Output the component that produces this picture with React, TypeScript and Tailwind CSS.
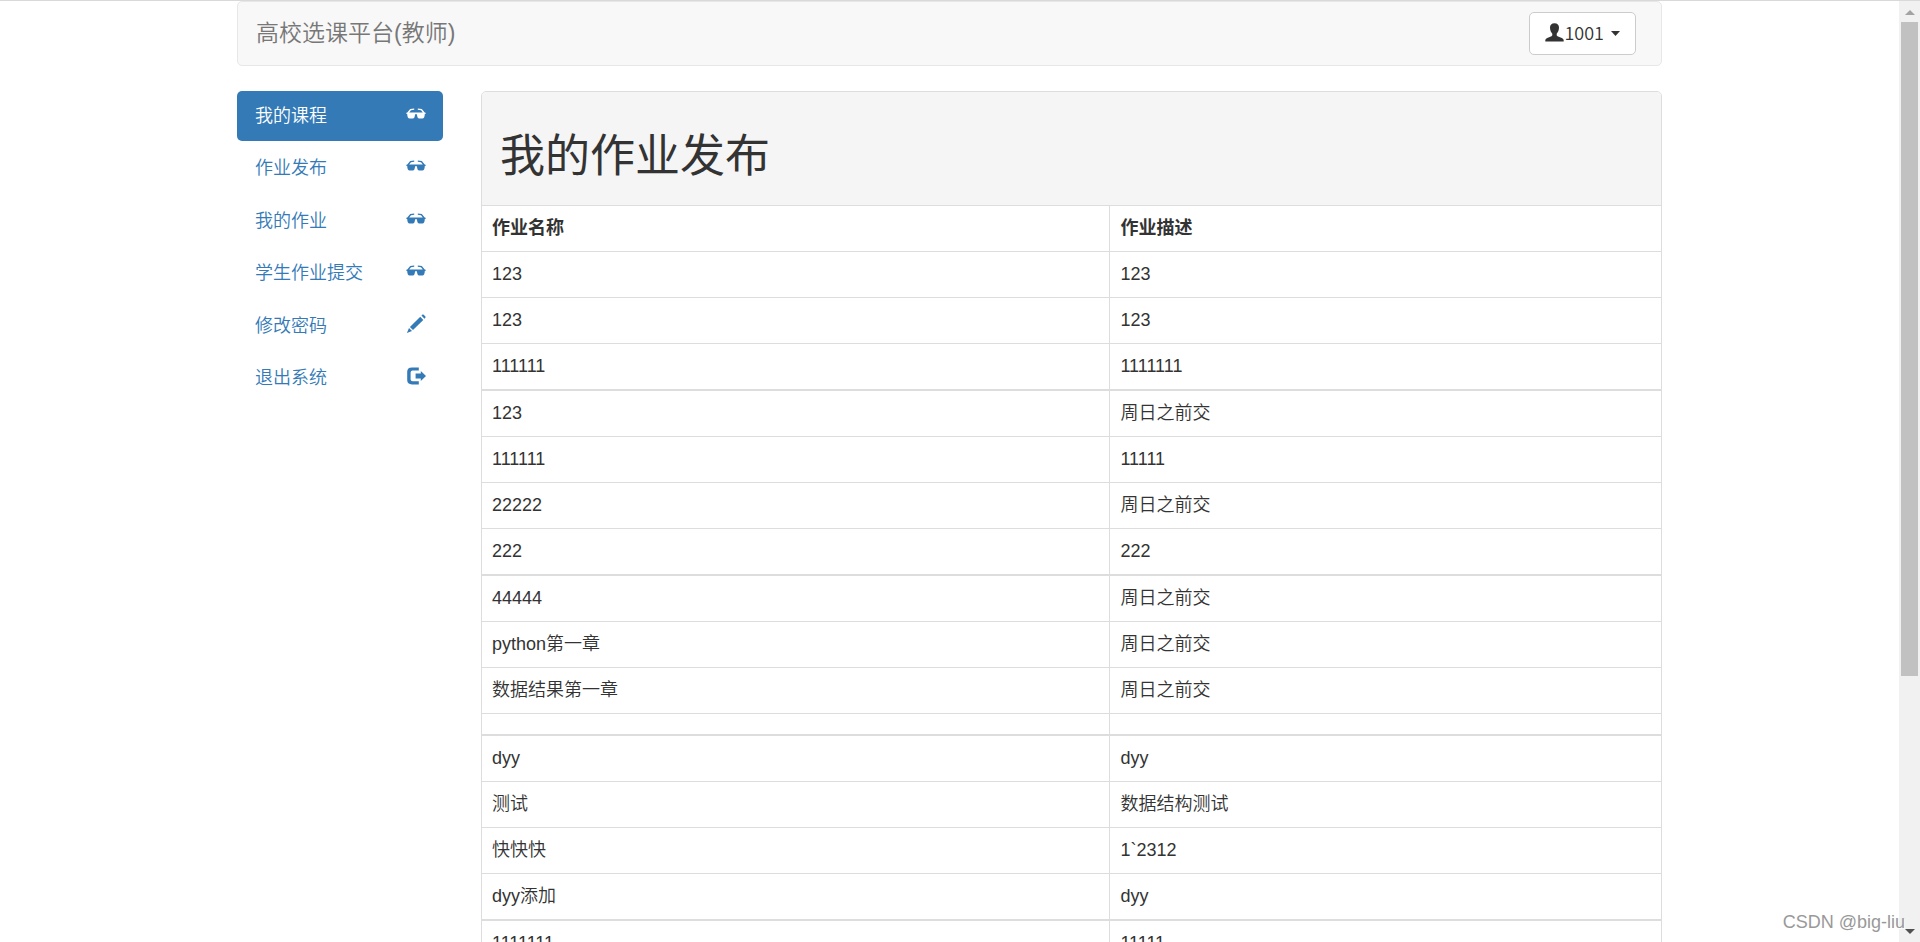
import React, { useState } from 'react';
import clsx from 'clsx';

interface MenuItem {
  label: string;
  icon: React.ReactNode;
}

interface Homework {
  name: string;
  desc: string;
  thick?: boolean;
}

const GlassesIcon = () => (
  <svg width="20" height="20" viewBox="0 0 20 20" fill="currentColor" aria-hidden="true">
    <path d="M8.2 4.4V5.8L5 6.3 3.2 8.4H16.8L15 6.3 11.8 5.8V4.4L15.8 5.1 18.7 8.4 19.6 8.8V10H18.8C18.7 13 17.8 14.6 16.4 14.6H13.2C11.8 14.6 11.2 13 10.9 10.2H9.1C8.8 13 8.2 14.6 6.8 14.6H3.6C2.2 14.6 1.3 13 1.2 10H.4V8.8L1.3 8.4 4.2 5.1Z" />
  </svg>
);

const PencilIcon = () => (
  <svg width="20" height="20" viewBox="0 0 20 20" fill="currentColor" aria-hidden="true">
    <path d="M15.5 1.6 16.5 .6Q17.1 .2 17.7 .7L19.4 2.5Q19.8 3.1 19.4 3.7L18.4 4.7Z" />
    <path d="M14.3 2.8 17.3 5.9 7 16.1 3.9 13Z" />
    <path d="M3 13.9 6 17 .9 19Z" />
  </svg>
);

const LogoutIcon = () => (
  <svg width="20" height="20" viewBox="0 0 20 20" fill="currentColor" aria-hidden="true">
    <path d="M12.8 1.4V4.6H6.6Q4.6 4.6 4.6 6.4V13.4Q4.6 15.2 6.6 15.2H12.8V18.4H6Q1.2 18.4 1.2 14V5.8Q1.2 1.4 6 1.4Z" />
    <path d="M14.8 4.9 20 9.9 14.8 15V12.4H9.6V7.5H14.8Z" />
  </svg>
);

const UserIcon = () => (
  <svg width="19" height="19" viewBox="0 0 19 19" fill="currentColor" aria-hidden="true">
    <path d="M9.5 .2C12.4 .2 14 1.8 14 4.6 14 7.6 12.9 9.6 11.7 10.7V12C11.7 12.7 12.2 13.1 13.1 13.4L16.8 15Q18.7 15.8 18.7 17.3V18.6H.3V17.3Q.3 15.8 2.2 15L5.9 13.4C6.8 13.1 7.3 12.7 7.3 12V10.7C6.1 9.6 5 7.6 5 4.6 5 1.8 6.6 .2 9.5 .2Z" />
  </svg>
);

const menu: MenuItem[] = [
  { label: '我的课程', icon: <GlassesIcon /> },
  { label: '作业发布', icon: <GlassesIcon /> },
  { label: '我的作业', icon: <GlassesIcon /> },
  { label: '学生作业提交', icon: <GlassesIcon /> },
  { label: '修改密码', icon: <PencilIcon /> },
  { label: '退出系统', icon: <LogoutIcon /> }
];

const homeworks: Homework[] = [
  { name: '123', desc: '123' },
  { name: '123', desc: '123' },
  { name: '111111', desc: '1111111' },
  { name: '123', desc: '周日之前交', thick: true },
  { name: '111111', desc: '11111' },
  { name: '22222', desc: '周日之前交' },
  { name: '222', desc: '222' },
  { name: '44444', desc: '周日之前交', thick: true },
  { name: 'python第一章', desc: '周日之前交' },
  { name: '数据结果第一章', desc: '周日之前交' },
  { name: '', desc: '' },
  { name: 'dyy', desc: 'dyy', thick: true },
  { name: '测试', desc: '数据结构测试' },
  { name: '快快快', desc: '1`2312' },
  { name: 'dyy添加', desc: 'dyy' },
  { name: '1111111', desc: '11111', thick: true }
];

function Navbar() {
  return (
    <header className="flex items-center justify-between rounded-[5px] border border-[#e7e7e7] bg-[#f8f8f8] py-[10px] pr-[25px] pl-[18px]">
      <a href="#" className="text-[23px] leading-[25px] text-[#777]">高校选课平台(教师)</a>
      <button
        type="button"
        className="flex h-[43px] cursor-pointer items-center rounded-[5px] border border-[#ccc] bg-white px-[15px] pb-[3px] font-['Noto_Sans_CJK_SC',sans-serif] text-lg text-[#333]"
      >
        <UserIcon />
        <span className="leading-[25px]">1001</span>
        <svg className="mt-[3px] ml-[7px]" width="9" height="5" viewBox="0 0 9 5" fill="currentColor" aria-hidden="true">
          <path d="M0 0H9L4.5 5Z" />
        </svg>
      </button>
    </header>
  );
}

function Sidebar() {
  const [active, setActive] = useState(0);

  return (
    <nav className="w-[206px] shrink-0">
      <ul>
        {menu.map((item, i) => (
          <li key={item.label} className="odd:pb-[2px] even:pb-[3px]">
            <a
              href="#"
              onClick={(e) => { e.preventDefault(); setActive(i); }}
              className={clsx(
                'flex h-[50px] items-center justify-between rounded-[5px] pr-[17px] pl-[18px]',
                active === i ? 'bg-[#337ab7] text-white' : 'text-[#337ab7] hover:bg-[#eee]'
              )}
            >
              <span>{item.label}</span>
              <span className="pb-1">{item.icon}</span>
            </a>
          </li>
        ))}
      </ul>
    </nav>
  );
}

function HomeworkTable() {
  return (
    <table className="w-full table-fixed border-separate border-spacing-0 text-left">
      <thead>
        <tr>
          <th className="w-[53.3%] border-t border-r border-[#ddd] p-[10px] leading-[25px] font-bold">作业名称</th>
          <th className="border-t border-[#ddd] p-[10px] leading-[25px] font-bold">作业描述</th>
        </tr>
      </thead>
      <tbody>
        {homeworks.map((hw, i) => (
          <tr key={i}>
            <td className={clsx('border-r border-[#ddd] p-[10px] leading-[25px]', hw.thick ? 'border-t-2' : 'border-t')}>{hw.name}</td>
            <td className={clsx('border-[#ddd] p-[10px] leading-[25px]', hw.thick ? 'border-t-2' : 'border-t')}>{hw.desc}</td>
          </tr>
        ))}
      </tbody>
    </table>
  );
}

function Scrollbar() {
  return (
    <div className="flex w-[21px] shrink-0 flex-col items-center bg-[#f1f1f1]" aria-hidden="true">
      <div className="flex h-[21px] items-center pt-[2px]">
        <svg width="10" height="5" viewBox="0 0 10 5" fill="#a3a3a3"><path d="M5 0 10 5H0Z" /></svg>
      </div>
      <div className="flex w-[17px] grow flex-col">
        <div className="h-[72.8%] bg-[#c1c1c1]" />
      </div>
      <div className="flex h-[21px] items-center">
        <svg width="10" height="5" viewBox="0 0 10 5" fill="#505050"><path d="M0 0H10L5 5Z" /></svg>
      </div>
    </div>
  );
}

export default function App() {
  return (
    <div className="relative flex h-screen overflow-hidden border-t border-[#d9d9d9] bg-white font-['Liberation_Sans','Noto_Sans_CJK_SC',sans-serif] text-lg font-[350] text-[#333]">
      <div className="min-w-0 grow overflow-hidden">
        <div className="mx-auto max-w-[1425px]">
          <Navbar />
          <div className="mt-[25px] flex gap-[38px]">
            <Sidebar />
            <main className="min-w-0 grow rounded-[5px] border border-[#ddd]">
              <div className="rounded-t-[4px] bg-[#f5f5f5] px-[18px] pt-[40px] pb-[24px]">
                <h1 className="text-[45px] leading-[49px] font-normal">我的作业发布</h1>
              </div>
              <HomeworkTable />
            </main>
          </div>
        </div>
      </div>
      <Scrollbar />
      <p className="absolute right-[15px] bottom-[9px] text-lg leading-[22px] text-[#999] [text-shadow:1px_1px_0_#fff]">CSDN @big-liu</p>
    </div>
  );
}
